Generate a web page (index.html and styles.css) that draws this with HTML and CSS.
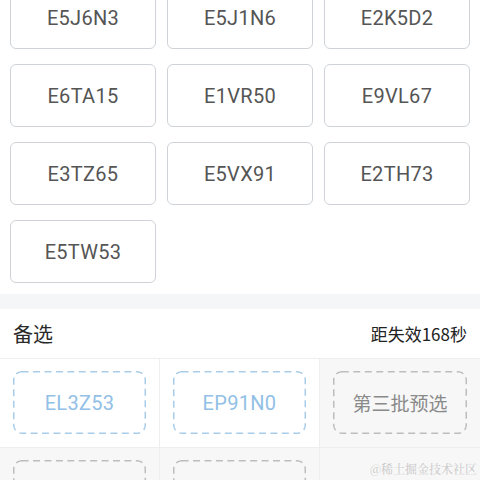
FILE: index.html
```html
<!DOCTYPE html>
<html lang="zh">
<head>
<meta charset="utf-8">
<link rel="stylesheet" href="styles.css">
</head>
<body>
<div class="page">
  <section class="chosen">
    <div class="grid">
      <div class="card">E5J6N3</div>
      <div class="card">E5J1N6</div>
      <div class="card">E2K5D2</div>
      <div class="card">E6TA15</div>
      <div class="card">E1VR50</div>
      <div class="card">E9VL67</div>
      <div class="card">E3TZ65</div>
      <div class="card">E5VX91</div>
      <div class="card">E2TH73</div>
      <div class="card">E5TW53</div>
    </div>
  </section>
  <div class="band"></div>
  <section class="alt">
    <div class="alt-head">
      <span class="alt-title">备选</span>
      <span class="alt-timer">距失效168秒</span>
    </div>
    <div class="alt-grid">
      <div class="cell"><div class="box box-on">EL3Z53</div></div>
      <div class="cell"><div class="box box-on">EP91N0</div></div>
      <div class="cell cell-gray"><div class="box box-off">第三批预选</div></div>
      <div class="cell cell-gray"><div class="box box-off"></div></div>
      <div class="cell cell-gray"><div class="box box-off"></div></div>
      <div class="cell cell-gray"></div>
    </div>
  </section>
  <div class="watermark">@稀土掘金技术社区</div>
</div>
</body>
</html>
```
FILE: styles.css
```css
html, body {
  margin: 0;
  padding: 0;
  background: #fff;
}
body {
  font-family: Roboto, "Noto Sans", "Noto Sans CJK SC", sans-serif;
  width: 480px;
  height: 480px;
  overflow: hidden;
}
.page {
  position: relative;
  width: 480px;
  height: 480px;
  overflow: hidden;
}
.chosen {
  background: #fff;
  padding: 0 10px 11px 10px;
  margin-top: -14px;
}
.grid {
  display: grid;
  grid-template-columns: repeat(3, 146px);
  grid-auto-rows: 63px;
  column-gap: 11px;
  row-gap: 15px;
}
.card {
  box-sizing: border-box;
  border: 1.5px solid #cfd3d7;
  border-radius: 6px;
  display: flex;
  align-items: center;
  justify-content: center;
  font-size: 20px;
  color: #555;
  letter-spacing: 0.3px;
}
.band {
  height: 15px;
  background: #f4f6f7;
}
.alt-head {
  box-sizing: border-box;
  height: 50px;
  display: flex;
  align-items: center;
  justify-content: space-between;
  padding: 0 13px 0 13px;
  border-bottom: 1px solid #eeeeee;
  font-family: "Noto Sans CJK SC", sans-serif;
}
.alt-title {
  font-size: 20px;
  color: #2a2a2a;
}
.alt-timer {
  font-size: 17px;
  color: #222;
}
.alt-grid {
  display: grid;
  grid-template-columns: repeat(3, 160px);
  grid-auto-rows: 89px;
}
.cell {
  box-sizing: border-box;
  border-right: 1px solid #eeeeee;
  border-bottom: 1px solid #eeeeee;
  padding: 12px 13px 13px 13px;
  background: #fff;
}
.cell:nth-child(3n) {
  border-right: none;
}
.cell-gray {
  background: #f7f7f7;
}
.box {
  box-sizing: border-box;
  height: 63px;
  border-radius: 8px;
  display: flex;
  align-items: center;
  justify-content: center;
  font-size: 20px;
  letter-spacing: 0.3px;
  background-repeat: no-repeat;
  background-size: 100% 100%;
}
.box-on {
  color: #92c0e6;
  background-color: #fff;
  background-image: url("data:image/svg+xml,%3Csvg xmlns='http://www.w3.org/2000/svg' width='134' height='63'%3E%3Crect x='0.75' y='0.75' width='132.5' height='61.5' rx='8' fill='none' stroke='%23a9cde8' stroke-width='1.5' stroke-dasharray='7 4.5'/%3E%3C/svg%3E");
}
.box-off {
  color: #8a8a8a;
  font-family: "Noto Sans CJK SC", sans-serif;
  font-size: 19px;
  letter-spacing: 0;
  background-image: url("data:image/svg+xml,%3Csvg xmlns='http://www.w3.org/2000/svg' width='134' height='63'%3E%3Crect x='0.75' y='0.75' width='132.5' height='61.5' rx='8' fill='none' stroke='%23bdbdbd' stroke-width='1.5' stroke-dasharray='7 4.5'/%3E%3C/svg%3E");
}
.watermark {
  position: absolute;
  right: 3px;
  bottom: 3px;
  font-family: "Noto Serif CJK SC", "Liberation Serif", serif;
  font-size: 12px;
  color: #c8c8c8;
}
```
